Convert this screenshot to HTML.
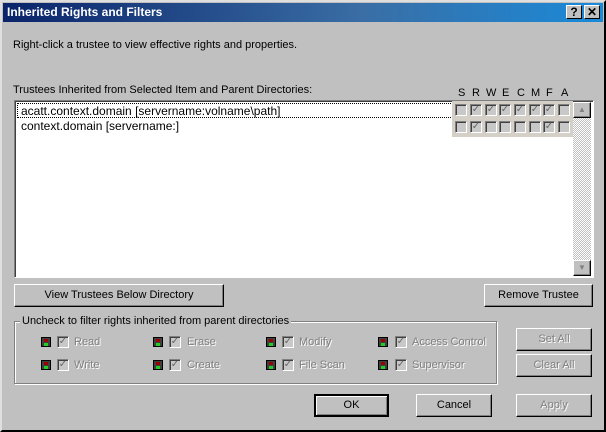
<!DOCTYPE html>
<html><head><style>
*{margin:0;padding:0;box-sizing:border-box}
body{width:606px;height:432px;background:#c0c0c0;font-family:"Liberation Sans",sans-serif;font-size:11px;color:#000;position:relative;overflow:hidden}
.a{position:absolute;white-space:nowrap}
.win{left:0;top:0;width:606px;height:432px;border:2px outset #fff;border-color:#dfdfdf #404040 #404040 #dfdfdf}
.title{left:3px;top:3px;width:600px;height:19px;background:linear-gradient(90deg,#0a246a,#3a6ea5 60%,#1a8ad8);color:#fff;font-weight:bold;font-size:12px;line-height:18px;padding-left:4px}
.tb{top:5px;width:16px;height:14px;background:#c0c0c0;border:1px solid;border-color:#fff #000 #000 #fff;font-weight:bold;font-size:12px;line-height:12px;text-align:center;color:#000}
.btn{background:#c0c0c0;border:1px solid;border-color:#fff #000 #000 #fff;box-shadow:inset -1px -1px #808080;text-align:center;line-height:20px;font-size:11px}
.dis{color:#808080;text-shadow:1px 1px #fff}
.cb{width:12px;height:12px;border:1px solid;border-color:#808080 #fff #fff #808080;box-shadow:inset 1px 1px #404040;background:#c8c8c8;font-size:10px;line-height:10px;text-align:center;color:#666}
.ck::after{content:"✓";}
.ico{width:10px;height:10px;background:#404040;border:1px solid #000}
.ico::before{content:"";position:absolute;left:2px;top:1px;width:4px;height:3px;background:#900}
.ico::after{content:"";position:absolute;left:2px;top:5px;width:4px;height:3px;background:#2c2}
</style></head><body>
<div class="a win"></div>
<div class="a title">Inherited Rights and Filters</div>
<div class="a tb" style="left:566px">?</div>
<div class="a tb" style="left:584px">✕</div>
<div class="a" style="left:13px;top:39px">Right-click a trustee to view effective rights and properties.</div>
<div class="a" style="left:13px;top:84px">Trustees Inherited from Selected Item and Parent Directories:</div>
<div class="a" style="left:458px;top:87px;font-size:11px;letter-spacing:0">
<span class="a" style="left:0">S</span><span class="a" style="left:14px">R</span><span class="a" style="left:28px">W</span><span class="a" style="left:44px">E</span><span class="a" style="left:59px">C</span><span class="a" style="left:73px">M</span><span class="a" style="left:88px">F</span><span class="a" style="left:103px">A</span></div>
<div class="a" style="left:14px;top:100px;width:580px;height:178px;background:#fff;border:1px solid;border-color:#808080 #fff #fff #808080;box-shadow:inset 1px 1px #404040"></div>
<div class="a" style="left:17px;top:103px;width:436px;height:15px;border:1px dotted #000"></div>
<div class="a" style="left:21px;top:104px;font-size:12px">acatt.context.domain [servername:volname\path]</div>
<div class="a" style="left:21px;top:119px;font-size:12px">context.domain [servername:]</div>
<div class="a" style="left:452px;top:101px;width:121px;height:36px;background:#d4d0c8"></div>
<div class="a" style="left:455px;top:104px">
<div class="a cb" style="left:0"></div><div class="a cb ck" style="left:15px"></div><div class="a cb ck" style="left:30px"></div><div class="a cb ck" style="left:44px"></div><div class="a cb ck" style="left:59px"></div><div class="a cb ck" style="left:74px"></div><div class="a cb ck" style="left:88px"></div><div class="a cb" style="left:103px"></div>
<div class="a cb" style="left:0;top:17px"></div><div class="a cb ck" style="left:15px;top:17px"></div><div class="a cb" style="left:30px;top:17px"></div><div class="a cb" style="left:44px;top:17px"></div><div class="a cb" style="left:59px;top:17px"></div><div class="a cb" style="left:74px;top:17px"></div><div class="a cb ck" style="left:88px;top:17px"></div><div class="a cb" style="left:103px;top:17px"></div>
</div>
<div class="a" style="left:573px;top:102px;width:18px;height:174px;background:repeating-conic-gradient(#fff 0 25%,#c0c0c0 0 50%) 0 0/2px 2px"></div>
<div class="a btn" style="left:573px;top:102px;width:18px;height:16px;line-height:14px;font-size:8px;color:#808080">▲</div>
<div class="a btn" style="left:573px;top:260px;width:18px;height:16px;line-height:14px;font-size:8px;color:#808080">▼</div>
<div class="a btn" style="left:14px;top:284px;width:210px;height:23px">View Trustees Below Directory</div>
<div class="a btn" style="left:484px;top:284px;width:109px;height:23px">Remove Trustee</div>
<div class="a" style="left:14px;top:321px;width:483px;height:63px;border:1px solid #808080;box-shadow:1px 1px #fff,inset 1px 1px #fff"></div>
<div class="a" style="left:20px;top:315px;background:#c0c0c0;padding:0 2px">Uncheck to filter rights inherited from parent directories</div>
<div class="a" style="left:0;top:0">
<div class="a ico" style="left:41px;top:337px"></div><div class="a cb ck" style="left:57px;top:336px"></div><div class="a dis" style="left:74px;top:336px">Read</div>
<div class="a ico" style="left:41px;top:360px"></div><div class="a cb ck" style="left:57px;top:359px"></div><div class="a dis" style="left:74px;top:359px">Write</div>
<div class="a ico" style="left:153px;top:337px"></div><div class="a cb ck" style="left:169px;top:336px"></div><div class="a dis" style="left:187px;top:336px">Erase</div>
<div class="a ico" style="left:153px;top:360px"></div><div class="a cb ck" style="left:169px;top:359px"></div><div class="a dis" style="left:187px;top:359px">Create</div>
<div class="a ico" style="left:266px;top:337px"></div><div class="a cb ck" style="left:282px;top:336px"></div><div class="a dis" style="left:299px;top:336px">Modify</div>
<div class="a ico" style="left:266px;top:360px"></div><div class="a cb ck" style="left:282px;top:359px"></div><div class="a dis" style="left:299px;top:359px">File Scan</div>
<div class="a ico" style="left:378px;top:337px"></div><div class="a cb ck" style="left:395px;top:336px"></div><div class="a dis" style="left:412px;top:336px">Access Control</div>
<div class="a ico" style="left:378px;top:360px"></div><div class="a cb ck" style="left:395px;top:359px"></div><div class="a dis" style="left:412px;top:359px">Supervisor</div>
</div>
<div class="a btn dis" style="left:516px;top:328px;width:76px;height:23px">Set All</div>
<div class="a btn dis" style="left:516px;top:354px;width:76px;height:23px">Clear All</div>
<div class="a btn" style="left:314px;top:394px;width:75px;height:23px;border:2px solid #000;box-shadow:inset 1px 1px #fff,inset -1px -1px #808080;line-height:19px">OK</div>
<div class="a btn" style="left:416px;top:394px;width:76px;height:23px">Cancel</div>
<div class="a btn dis" style="left:516px;top:394px;width:76px;height:23px">Apply</div>
</body></html>
